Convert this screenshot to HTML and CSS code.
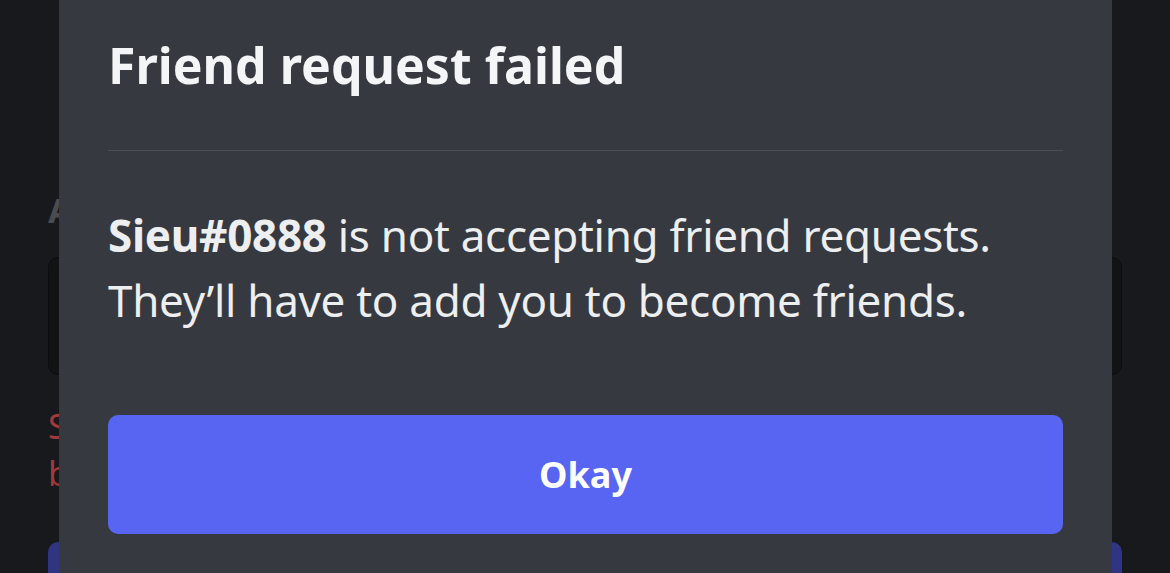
FILE: index.html
```html
<!DOCTYPE html>
<html>
<head>
<meta charset="utf-8">
<link rel="stylesheet" href="styles.css">
</head>
<body>
<div class="page">
  <div class="label">ADD FRIEND</div>
  <div class="input"></div>
  <div class="error">
    <span class="error-line">Something went wrong. Double check that the capitalization,</span>
    <span class="error-line">but also the spelling, any spaces, and numbers are correct.</span>
  </div>
  <div class="send"></div>
</div>
<div class="modal">
  <h1 class="title">Friend request failed</h1>
  <div class="divider"></div>
  <p class="message">
    <span class="line"><strong>Sieu#0888</strong> is not accepting friend requests.</span>
    <span class="line">They’ll have to add you to become friends.</span>
  </p>
  <button class="okay">Okay</button>
</div>
</body>
</html>
```

FILE: styles.css
```css
html, body {
  margin: 0;
  padding: 0;
  width: 1170px;
  height: 573px;
  overflow: hidden;
  background: #18191c;
  font-family: "Noto Sans", "Open Sans", sans-serif;
}

.page {
  padding: 190px 48px 0;
  display: flex;
  flex-direction: column;
}

.label {
  color: #4a4c51;
  font-weight: 700;
  font-size: 34px;
  line-height: 40px;
}

.input {
  margin-top: 27px;
  height: 116px;
  border-radius: 10px;
  background: #121315;
  border: 1px solid #0c0d0e;
}

.error {
  margin-top: 28px;
  color: #a13a3c;
  font-size: 34px;
  line-height: 47px;
  display: flex;
  flex-direction: column;
}

.error-line {
  white-space: nowrap;
}

.send {
  margin-top: 45px;
  height: 80px;
  border-radius: 10px;
  background: #2f3580;
}

.modal {
  position: absolute;
  left: 59px;
  top: -30px;
  width: 1053px;
  height: 618px;
  box-sizing: border-box;
  padding: 0 49px;
  background: #36393f;
  border-radius: 22px;
  display: flex;
  flex-direction: column;
}

.title {
  margin: 65px 0 0;
  color: #f4f5f7;
  font-weight: 700;
  font-size: 50px;
  line-height: 60px;
}

.divider {
  margin-top: 55px;
  height: 1px;
  background: #4c4f55;
}

.message {
  margin: 52px 0 0;
  color: #eceef0;
  font-size: 44px;
  line-height: 65px;
  letter-spacing: -0.3px;
  display: flex;
  flex-direction: column;
}

.line {
  white-space: nowrap;
}

.message strong {
  font-weight: 700;
}

.okay {
  margin-top: 82px;
  height: 119px;
  border: 0;
  border-radius: 10px;
  background: #5865f2;
  color: #ffffff;
  font-family: inherit;
  font-weight: 700;
  font-size: 36px;
}
```
